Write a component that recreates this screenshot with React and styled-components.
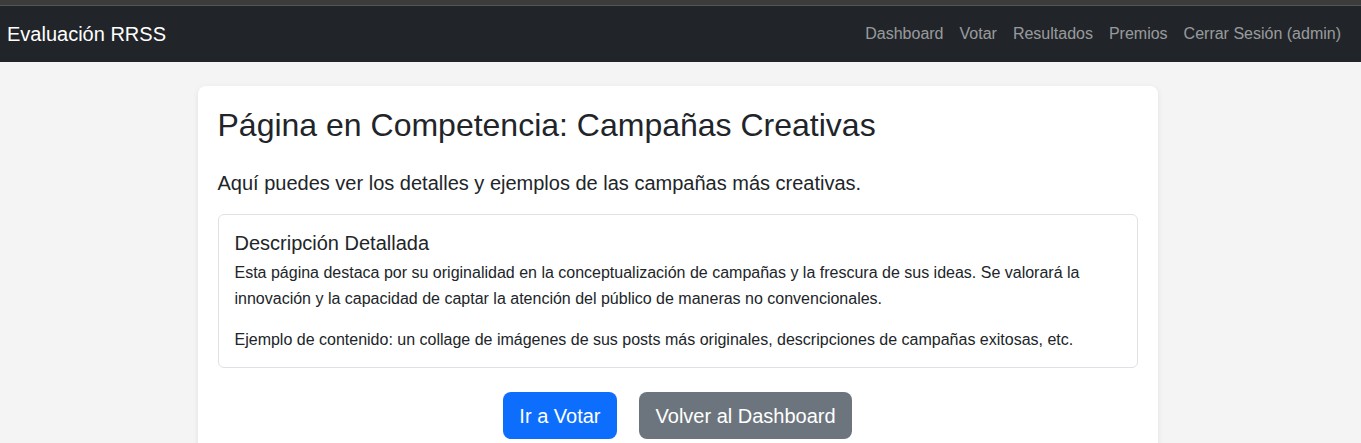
import React from "react";
import styled, { createGlobalStyle } from "styled-components";

const Global = createGlobalStyle`
  body {
    margin: 0;
    background: #f4f4f4;
    font-family: "Liberation Sans", Arial, sans-serif;
    color: #212529;
  }
  * { box-sizing: border-box; }
`;

const TopStrip = styled.div`
  height: 6px;
  background: #3c3c3c;
  border-bottom: 1px solid #555;
`;

const Navbar = styled.nav`
  height: 56px;
  background: #212529;
  display: flex;
  align-items: center;
  justify-content: space-between;
  padding: 0 12px 0 7px;
`;

const Brand = styled.a`
  color: #fff;
  font-size: 20px;
  text-decoration: none;
`;

const NavList = styled.div`
  display: flex;
`;

const NavLink = styled.a`
  color: rgba(255, 255, 255, 0.55);
  font-size: 16px;
  padding: 8px;
  text-decoration: none;
`;

const Main = styled.main`
  display: flex;
  justify-content: center;
  padding: 24px 6px 0 0;
`;

const Card = styled.section`
  width: 960px;
  background: #fff;
  border-radius: 8px;
  box-shadow: 0 2px 6px rgba(0, 0, 0, 0.08);
  padding: 20px 20px 24px;
`;

const Title = styled.h1`
  margin: 0 0 24px;
  font-size: 32px;
  font-weight: 400;
  line-height: 1.2;
`;

const Lead = styled.p`
  margin: 0 0 16px;
  font-size: 20px;
  line-height: 1.5;
`;

const InfoBox = styled.div`
  border: 1px solid #dee2e6;
  border-radius: 6px;
  padding: 16px 16px 15px;
  margin-bottom: 24px;
`;

const InfoTitle = styled.h5`
  margin: 0 0 5px;
  font-size: 20px;
  font-weight: 400;
  line-height: 1.2;
`;

const InfoText = styled.p`
  margin: 0 0 ${(p) => p.$mb || 0}px;
  font-size: 16px;
  line-height: 1.6;
`;

const Actions = styled.div`
  display: flex;
  justify-content: center;
  gap: 22px;
`;

const Btn = styled.a`
  display: inline-block;
  padding: 8.5px 16.5px;
  font-size: 20px;
  line-height: 1.5;
  border-radius: 8px;
  color: #fff;
  text-decoration: none;
  background: ${(p) => (p.$variant === "secondary" ? "#6c757d" : "#0d6efd")};
`;

export default function App() {
  const links = ["Dashboard", "Votar", "Resultados", "Premios", "Cerrar Sesión (admin)"];
  return (
    <>
      <Global />
      <TopStrip />
      <Navbar>
        <Brand href="#">Evaluación RRSS</Brand>
        <NavList>
          {links.map((l) => (
            <NavLink key={l} href="#">{l}</NavLink>
          ))}
        </NavList>
      </Navbar>
      <Main>
        <Card>
          <Title>Página en Competencia: Campañas Creativas</Title>
          <Lead>Aquí puedes ver los detalles y ejemplos de las campañas más creativas.</Lead>
          <InfoBox>
            <InfoTitle>Descripción Detallada</InfoTitle>
            <InfoText $mb={15}>
              Esta página destaca por su originalidad en la conceptualización de campañas y la frescura de sus ideas. Se valorará la innovación y la capacidad de captar la atención del público de maneras no convencionales.
            </InfoText>
            <InfoText>
              Ejemplo de contenido: un collage de imágenes de sus posts más originales, descripciones de campañas exitosas, etc.
            </InfoText>
          </InfoBox>
          <Actions>
            <Btn href="#">Ir a Votar</Btn>
            <Btn href="#" $variant="secondary">Volver al Dashboard</Btn>
          </Actions>
        </Card>
      </Main>
    </>
  );
}
